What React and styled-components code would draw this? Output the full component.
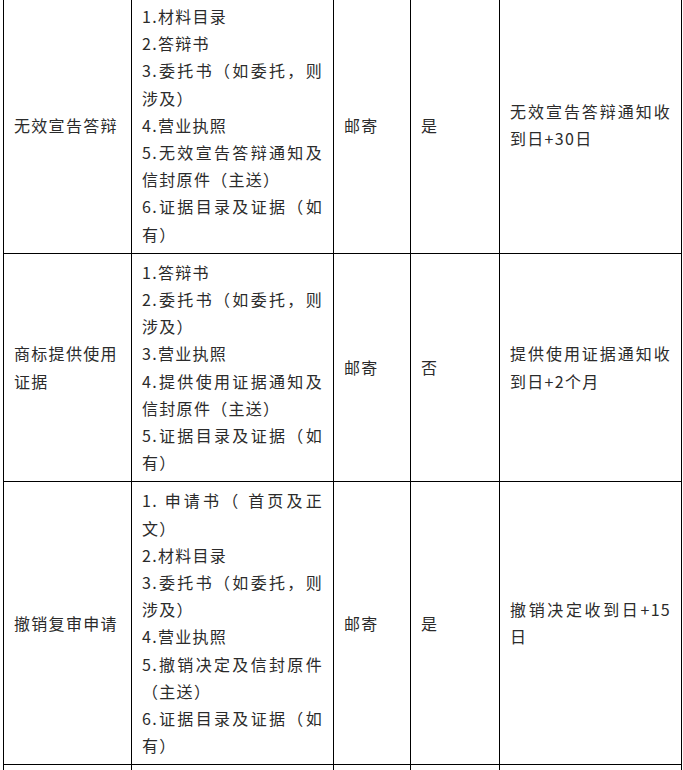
import React from "react";
import styled, { createGlobalStyle } from "styled-components";

const Global = createGlobalStyle`
  html, body { margin: 0; padding: 0; background: #fff; overflow: hidden; }
  body { font-family: "Noto Sans CJK SC", "Microsoft YaHei", sans-serif; }
`;

const Page = styled.div`
  padding-left: 3px;
  margin-top: -3px;
  width: 678px;
`;

const Table = styled.table`
  border-collapse: collapse;
  table-layout: fixed;
  width: 678px;
  color: #2b2b2b;
  font-size: 16px;
  letter-spacing: 1.3px;
  line-height: 27.2px;
`;

const Cell = styled.td`
  border: 1px solid #000;
  padding: 5px 10px;
  vertical-align: middle;
  text-align: ${(p) => (p.$justify ? "justify" : "left")};
  word-break: normal;
  height: ${(p) => (p.$h ? p.$h + "px" : "auto")};
`;

const Line = styled.div``;

const rows = [
  {
    name: "无效宣告答辩",
    items: [
      "1.材料目录",
      "2.答辩书",
      "3.委托书（如委托，则涉及）",
      "4.营业执照",
      "5.无效宣告答辩通知及信封原件（主送）",
      "6.证据目录及证据（如有）",
    ],
    way: "邮寄",
    yes: "是",
    due: "无效宣告答辩通知收到日+30日",
  },
  {
    name: "商标提供使用证据",
    items: [
      "1.答辩书",
      "2.委托书（如委托，则涉及）",
      "3.营业执照",
      "4.提供使用证据通知及信封原件（主送）",
      "5.证据目录及证据（如有）",
    ],
    way: "邮寄",
    yes: "否",
    due: "提供使用证据通知收到日+2个月",
  },
  {
    name: "撤销复审申请",
    items: [
      "1. 申请书（ 首页及正文）",
      "2.材料目录",
      "3.委托书（如委托，则涉及）",
      "4.营业执照",
      "5.撤销决定及信封原件（主送）",
      "6.证据目录及证据（如有）",
    ],
    way: "邮寄",
    yes: "是",
    due: "撤销决定收到日+15日",
  },
];

export default function App() {
  return (
    <>
      <Global />
      <Page>
        <Table>
          <colgroup>
            <col style={{ width: 128 }} />
            <col style={{ width: 202 }} />
            <col style={{ width: 77 }} />
            <col style={{ width: 89 }} />
            <col style={{ width: 182 }} />
          </colgroup>
          <tbody>
            {rows.map((r) => (
              <tr key={r.name}>
                <Cell>{r.name}</Cell>
                <Cell $justify>
                  {r.items.map((t) => (
                    <Line key={t}>{t}</Line>
                  ))}
                </Cell>
                <Cell>{r.way}</Cell>
                <Cell>{r.yes}</Cell>
                <Cell $justify>{r.due}</Cell>
              </tr>
            ))}
            <tr>
              <Cell $h={40} />
              <Cell />
              <Cell />
              <Cell />
              <Cell />
            </tr>
          </tbody>
        </Table>
      </Page>
    </>
  );
}
